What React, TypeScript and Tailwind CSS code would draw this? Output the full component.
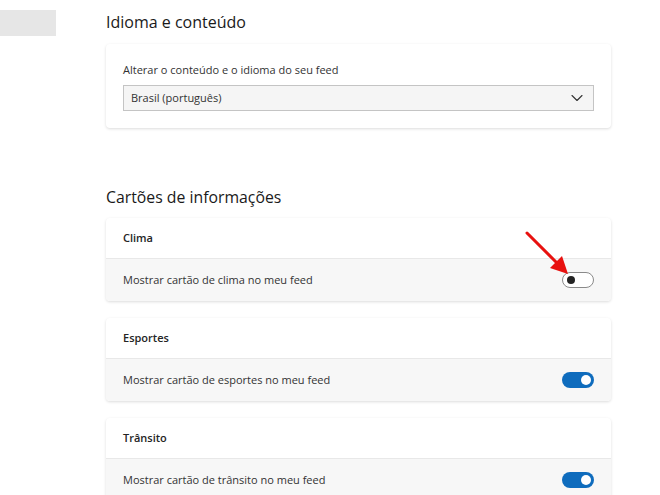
import { ChevronDown } from "lucide-react";

// ── Toggle ────────────────────────────────────────────────
const Toggle = ({ on }: { on: boolean }) =>
  on ? (
    <div className="w-[32px] h-[16px] rounded-full bg-[#0f6cbd] flex items-center justify-end pr-[3px]">
      <div className="w-[10px] h-[10px] rounded-full bg-white" />
    </div>
  ) : (
    <div className="w-[32px] h-[16px] rounded-full bg-white border border-[#8a8a8a] flex items-center pl-[4px]">
      <div className="w-[8px] h-[8px] rounded-full bg-[#242424]" />
    </div>
  );

// ── Info card ─────────────────────────────────────────────
const InfoCard = ({ title, label, on, arrow }: { title: string; label: string; on: boolean; arrow?: boolean }) => (
  <div className="relative rounded-[4px] bg-white shadow-[0_1px_3px_rgba(0,0,0,0.14)]">
    <div className="h-[41px] px-[17px] flex items-center text-[11px] font-semibold text-[#242424] border-b border-[#e8e8e8]">
      {title}
    </div>
    <div className="h-[42px] px-[17px] flex items-center justify-between bg-[#f7f7f7] rounded-b-[4px] text-[11px] text-[#333]">
      <span>{label}</span>
      <Toggle on={on} />
    </div>
    {arrow && (
      <svg className="absolute left-[418px] top-[12px]" width="46" height="46" viewBox="0 0 46 46">
        <line x1="3" y1="3" x2="34" y2="34" stroke="#e8110f" strokeWidth="3" strokeLinecap="round" />
        <polygon points="44,44 26,38 38,26" fill="#e8110f" />
      </svg>
    )}
  </div>
);

// ── Main page ─────────────────────────────────────────────
export default function App() {
  return (
    <div className="w-[660px] h-[495px] bg-white flex overflow-hidden" style={{ fontFamily: '"Open Sans", "Noto Sans", sans-serif' }}>
      <div className="w-[56px] shrink-0">
        <div className="mt-[10px] h-[26px] bg-[#e6e6e6]" />
      </div>

      <div className="ml-[50px] w-[505px] pt-[10px]">
        <h2 className="text-[16px] leading-[24px] text-[#1a1a1a]">Idioma e conteúdo</h2>

        <div className="mt-[10px] rounded-[4px] bg-white shadow-[0_1px_3px_rgba(0,0,0,0.14)] px-[17px] pt-[18px] pb-[17px]">
          <p className="text-[11px] leading-[16px] text-[#333]">Alterar o conteúdo e o idioma do seu feed</p>
          <div className="mt-[7px] h-[26px] bg-[#f5f5f5] border border-[#c4c4c4] flex items-center justify-between pl-[7px] pr-[6px] text-[11px] text-[#333]">
            <span>Brasil (português)</span>
            <ChevronDown size={20} strokeWidth={1.3} className="text-[#333]" />
          </div>
        </div>

        <h2 className="mt-[57px] text-[15.8px] leading-[24px] text-[#1a1a1a]">Cartões de informações</h2>

        <div className="mt-[9px] flex flex-col gap-[17px]">
          <InfoCard title="Clima" label="Mostrar cartão de clima no meu feed" on={false} arrow />
          <InfoCard title="Esportes" label="Mostrar cartão de esportes no meu feed" on />
          <InfoCard title="Trânsito" label="Mostrar cartão de trânsito no meu feed" on />
        </div>
      </div>
    </div>
  );
}
